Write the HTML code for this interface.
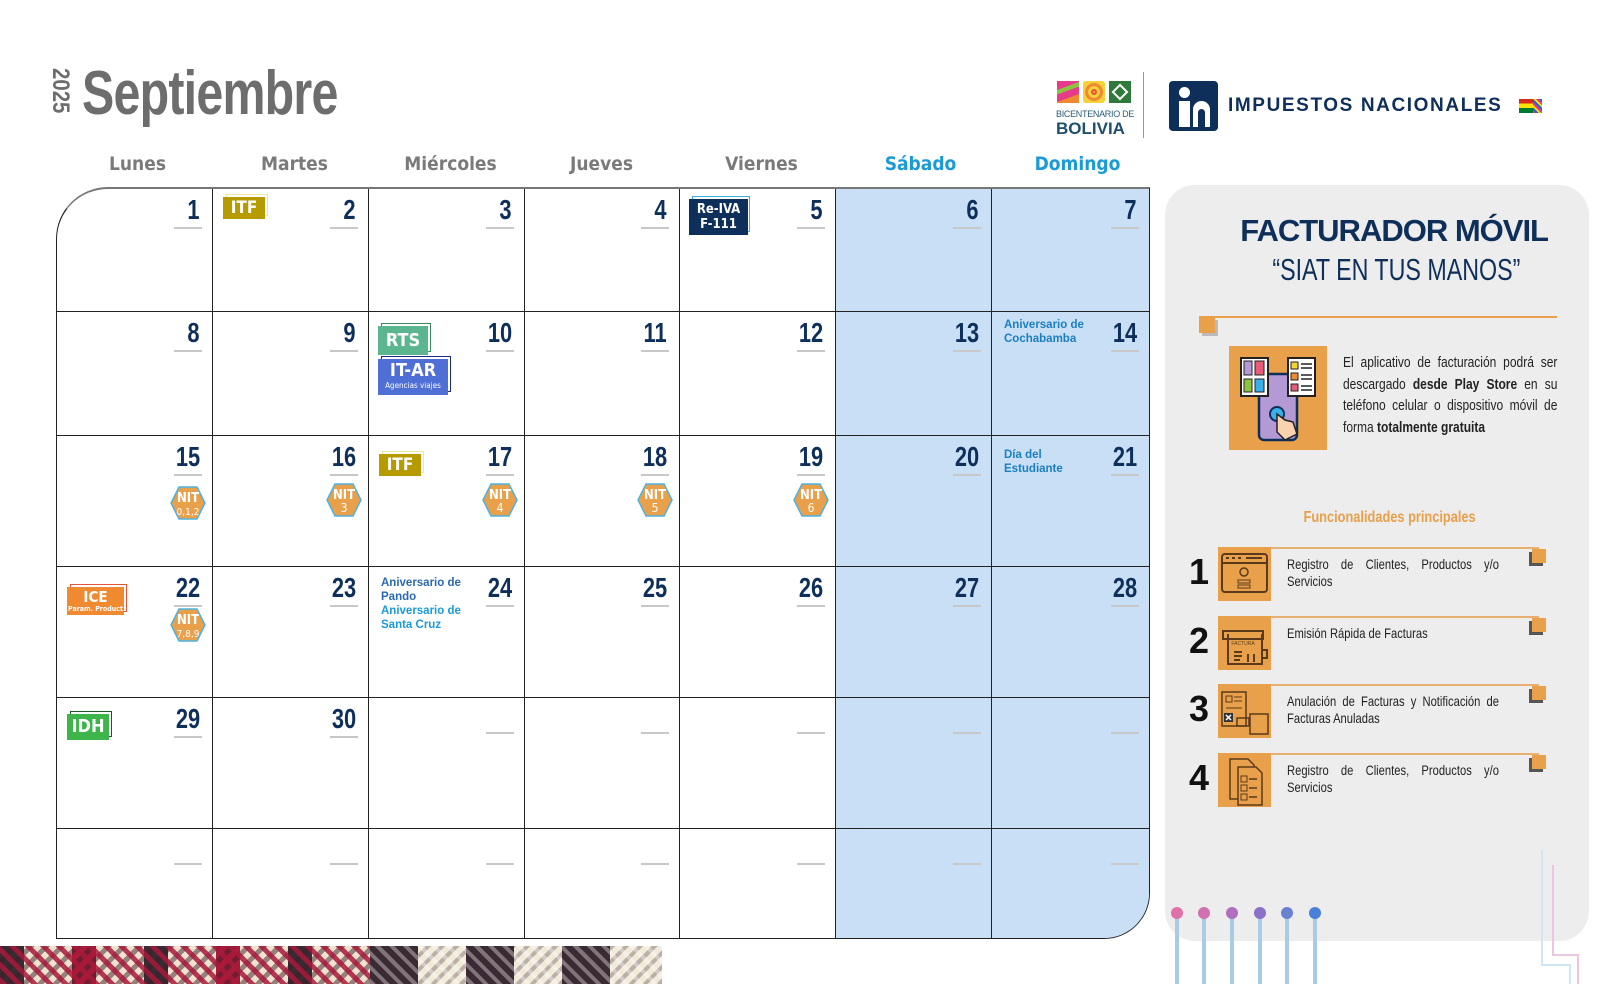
<!DOCTYPE html>
<html><head><meta charset="utf-8">
<style>
*{margin:0;padding:0;box-sizing:border-box}
body{width:1620px;height:984px;background:#fff;position:relative;overflow:hidden;font-family:"Liberation Sans",sans-serif}
.cd{font-family:"DejaVu Sans Condensed","Liberation Sans",sans-serif}
.abs{position:absolute}
.dh{position:absolute;top:153px;width:157px;text-align:center;font-size:19px;color:#7a7a7a;font-weight:bold}
.cell{position:absolute;border-right:1.5px solid #222;border-bottom:1.5px solid #222}
.num{position:absolute;right:12px;top:5px;font-family:"Liberation Sans",sans-serif;font-weight:bold;font-size:28px;color:#0d2f5a;transform:scaleX(.78);transform-origin:right top}
.ul{position:absolute;right:10px;top:38px;width:28px;height:2px;background:#c8c8c8}
.bd{position:absolute;color:#fff;font-family:"DejaVu Sans Condensed",sans-serif;font-weight:bold;text-align:center}
.hex{position:absolute;right:6px;top:50px;width:36px;height:34px}
.ev{position:absolute;left:12px;top:6px;font-size:11.5px;font-weight:bold;line-height:14px}
.item{position:absolute;left:1189px;width:360px;height:56px}
.item .n{position:absolute;left:0;top:4px;font-size:36px;font-weight:bold;color:#111}
.item .ib{position:absolute;left:29px;top:0;width:53px;height:54px;background:#e8a04a}
.item .ln{position:absolute;left:82px;top:0;width:268px;height:2px;background:#e8b070}
.item .t{position:absolute;left:98px;top:9px;width:265px;font-size:14px;color:#222;line-height:17px;text-align:justify;transform:scaleX(.8);transform-origin:left top}
.item .cr{position:absolute;left:343px;top:2px;width:14px;height:14px;background:#e8a04a;box-shadow:-3px 3px 0 #555}
</style></head><body>

<div class="abs" style="left:48px;top:68px;width:26px;height:60px;">
  <div style="transform:rotate(90deg) scaleX(.85);transform-origin:0 0;position:absolute;left:26px;top:0;font-size:24px;font-weight:bold;color:#6d6d6d;white-space:nowrap">2025</div>
</div>
<div class="abs" style="left:82px;top:58px;font-size:62px;font-weight:bold;color:#6d6d6d;letter-spacing:-1px;transform:scaleX(.78);transform-origin:left top">Septiembre</div>

<div class="abs" style="left:1057px;top:81px;width:22px;height:22px;background:linear-gradient(160deg,#e63a8a 0 30%,#8bc43f 30% 45%,#e63a8a 45% 70%,#f08a30 70%)"></div>
<div class="abs" style="left:1083px;top:81px;width:22px;height:22px;background:#f6d23a;border-radius:3px"><div style="position:absolute;left:2px;top:2px;width:18px;height:18px;border-radius:50%;border:3px solid #f08a30;box-shadow:inset 0 0 0 3px #f6d23a,inset 0 0 0 5px #e8533a"></div></div>
<div class="abs" style="left:1109px;top:81px;width:22px;height:22px;background:#2f7a3a"><div style="position:absolute;left:5px;top:5px;width:12px;height:12px;transform:rotate(45deg);border:2px solid #fff"></div></div>
<div class="abs" style="left:1056px;top:109px;font-size:9px;color:#2b5d7a;letter-spacing:-0.3px">BICENTENARIO DE</div>
<div class="abs" style="left:1056px;top:119px;font-size:17px;font-weight:bold;color:#1e4f6b">BOLIVIA</div>
<div class="abs" style="left:1143px;top:72px;width:1px;height:66px;background:#999"></div>
<div class="abs" style="left:1169px;top:81px;width:49px;height:50px;background:#0d2f5a;border-radius:4px">
  <div style="position:absolute;left:10px;top:6px;width:11px;height:11px;border-radius:50%;background:#fff"></div>
  <div style="position:absolute;left:10px;top:20px;width:11px;height:26px;background:#fff"></div>
  <div style="position:absolute;left:24px;top:20px;width:17px;height:26px;background:#fff;border-radius:9px 9px 0 0"></div>
  <div style="position:absolute;left:29px;top:28px;width:7px;height:18px;background:#0d2f5a;border-radius:4px 4px 0 0"></div>
</div>
<div class="abs" style="left:1228px;top:95px;font-size:19px;font-weight:bold;color:#0d2f5a;letter-spacing:1.6px">IMPUESTOS NACIONALES</div>
<div class="abs" style="left:1519px;top:99px;width:23px;height:14px;background:linear-gradient(#d52b1e 0 33%,#f9e300 33% 66%,#007934 66%)"></div>
<div class="abs" style="left:1533px;top:99px;width:9px;height:14px;background:repeating-linear-gradient(45deg,#e63a8a 0 2px,#2a64c8 2px 4px,#f9e300 4px 6px)"></div>

<div class="dh cd" style="left:59px">Lunes</div>
<div class="dh cd" style="left:216px">Martes</div>
<div class="dh cd" style="left:372px">Miércoles</div>
<div class="dh cd" style="left:523px">Jueves</div>
<div class="dh cd" style="left:683px">Viernes</div>
<div class="dh cd" style="left:842px;color:#1a9ad6">Sábado</div>
<div class="dh cd" style="left:999px;color:#1a9ad6">Domingo</div>

<div class="abs" style="left:56px;top:187px;width:1094px;height:752px;border:1.5px solid #222;border-top:2.5px solid #777;border-radius:52px 0 46px 0;overflow:hidden;background:#fff">
  <div class="abs" style="left:779px;top:0;width:320px;height:760px;background:#c9dff5"></div>
  <div id="g"></div>
</div>

<script>
var cols=[0,156,312,468,623,779,935,1092];
var rows=[0,123,247,378,509,640,752];
var g=document.getElementById('g');
var html='';
var day=1;
for(var r=0;r<6;r++){for(var c=0;c<7;c++){
  var w=cols[c+1]-cols[c],h=rows[r+1]-rows[r];
  var br=c==6?'border-right:none;':'';var bb=r==5?'border-bottom:none;':'';
  var n='';
  if(r<5&&day<=30&&(r*7+c)<30){n='<div class="num">'+day+'</div>';day++;}
  var ul='<div class="ul"'+(n?'':' style="top:34px"')+'></div>';
  html+='<div class="cell" id="c'+r+'_'+c+'" style="left:'+cols[c]+'px;top:'+rows[r]+'px;width:'+w+'px;height:'+h+'px;'+br+bb+'">'+n+ul+'</div>';
}}
g.innerHTML=html;
function add(r,c,s){document.getElementById('c'+r+'_'+c).insertAdjacentHTML('beforeend',s);}
function badge(r,c,x,y,w,h,bg,brd,txt,fs){add(r,c,'<div class="abs" style="left:'+(x+3)+'px;top:'+(y-3)+'px;width:'+w+'px;height:'+h+'px;border:1px solid '+brd+'"></div><div class="bd" style="left:'+x+'px;top:'+y+'px;width:'+w+'px;height:'+h+'px;background:'+bg+';font-size:'+fs+'px;line-height:'+h+'px">'+txt+'</div>');}
function hex(r,c,t,sub,top){add(r,c,'<svg class="hex" style="top:'+top+'px" viewBox="0 0 36 34"><polygon points="9,1 27,1 35,17 27,33 9,33 1,17" fill="#e8a04a" stroke="#4fb3e0" stroke-width="1.5"/><text x="18" y="16" text-anchor="middle" font-family="DejaVu Sans Condensed" font-weight="bold" font-size="13" fill="#fff">NIT</text><text x="18" y="29" text-anchor="middle" font-family="DejaVu Sans Condensed" font-size="'+(sub.length>2?10:12)+'" fill="#fff">'+sub+'</text></svg>');}
badge(0,1,10,8,42,22,'#b59a00','#efe6a0','ITF',17);
add(0,4,'<div class="abs" style="left:12px;top:7px;width:58px;height:36px;border:1px solid #3ab0e8"></div><div class="bd" style="left:9px;top:10px;width:59px;height:36px;background:#0d2f5a;font-size:13px;line-height:15px;padding-top:3px">Re-IVA<br>F-111</div>');
badge(1,2,9,14,50,29,'#5bb58e','#3a8a60','RTS',18);
add(1,2,'<div class="abs" style="left:12px;top:44px;width:70px;height:36px;border:1px solid #1a2a8a"></div><div class="bd" style="left:9px;top:47px;width:70px;height:36px;background:#4f6fd6;font-size:18px;line-height:20px;padding-top:2px">IT-AR<div style="font-size:8px;line-height:9px;font-weight:normal">Agencias viajes</div></div>');
badge(2,2,10,18,42,22,'#b59a00','#efe6a0','ITF',17);
add(3,0,'<div class="abs" style="left:13px;top:17px;width:57px;height:28px;border:1px solid #e8533a"></div><div class="bd" style="left:10px;top:20px;width:57px;height:28px;background:#f08a30;font-size:15px;line-height:16px;padding-top:2px">ICE<div style="font-size:7px;line-height:8px">Param. Product</div></div>');
badge(4,0,10,16,42,26,'#3db54a','#1a5a2a','IDH',18);
hex(2,0,'NIT','0,1,2',50);hex(2,1,'NIT','3',47);hex(2,2,'NIT','4',47);hex(2,3,'NIT','5',47);hex(2,4,'NIT','6',47);
hex(3,0,'NIT','7,8,9',41);
add(1,6,'<div class="ev" style="color:#1a7fc0">Aniversario de<br>Cochabamba</div>');
add(2,6,'<div class="ev" style="color:#1a7fc0;top:12px">Día del<br>Estudiante</div>');
add(3,2,'<div class="ev" style="color:#2a6ab0;top:9px">Aniversario de<br>Pando<br><span style="color:#1a9ad6">Aniversario de<br>Santa Cruz</span></div>');
</script>

<div class="abs" style="left:1165px;top:185px;width:424px;height:756px;background:#ededed;border-radius:30px"></div>
<div class="abs" style="left:1163px;top:213px;width:385px;text-align:right;font-size:31px;font-weight:bold;color:#0d2f5a;letter-spacing:-1px">FACTURADOR MÓVIL</div>
<div class="abs" style="left:1196px;top:252px;width:400px;text-align:center;"><span style="display:inline-block;font-size:31px;color:#0d2f5a;transform:scaleX(.75)">“SIAT EN TUS MANOS”</span></div>
<div class="abs" style="left:1199px;top:316px;width:358px;height:2px;background:#e8a04a"></div>
<div class="abs" style="left:1202px;top:320px;width:16px;height:16px;background:#bbb"></div>
<div class="abs" style="left:1199px;top:317px;width:16px;height:16px;background:#e8a04a"></div>
<div class="abs" style="left:1229px;top:346px;width:98px;height:104px;background:#e8a04a">
  <svg width="98" height="104" viewBox="0 0 98 104">
    <rect x="30" y="28" width="38" height="66" rx="5" fill="#b39ad4" stroke="#0d2f5a" stroke-width="2.5"/>
    <rect x="12" y="12" width="27" height="38" fill="#fff" stroke="#222" stroke-width="2"/>
    <rect x="15" y="15" width="8" height="14" fill="#b39ad4" stroke="#222"/><rect x="26" y="15" width="9" height="14" fill="#e85a7a" stroke="#222"/>
    <rect x="15" y="33" width="8" height="13" fill="#8bc43f" stroke="#222"/><rect x="26" y="33" width="9" height="13" fill="#3ab0e8" stroke="#222"/>
    <rect x="59" y="12" width="27" height="38" fill="#fff" stroke="#222" stroke-width="2"/>
    <rect x="62" y="16" width="7" height="7" fill="#f6d23a" stroke="#222"/><rect x="62" y="27" width="7" height="7" fill="#f08a30" stroke="#222"/><rect x="62" y="38" width="7" height="7" fill="#e85a7a" stroke="#222"/>
    <path d="M72 18h11M72 22h11M72 29h11M72 33h11M72 40h11M72 44h11" stroke="#222" stroke-width="1.5"/>
    <circle cx="48" cy="68" r="7" fill="#3ab0e8" stroke="#0d2f5a" stroke-width="2"/>
    <path d="M48 68 l0 18 l8 8 l12 -6 l-4 -12 l-8 -2 z" fill="#fbd2b0" stroke="#222" stroke-width="1.5"/>
  </svg>
</div>
<div class="abs" style="left:1343px;top:352px;width:268px;font-size:15px;line-height:21.5px;color:#222;text-align:justify;transform:scaleX(.8);transform-origin:left top">El aplicativo de facturación podrá ser descargado <b>desde Play Store</b> en su teléfono celular o dispositivo móvil de forma <b>totalmente gratuita</b></div>
<div class="abs" style="left:1240px;top:509px;width:300px;text-align:center;"><span style="display:inline-block;font-size:16px;font-weight:bold;color:#e8a04a;transform:scaleX(.8);white-space:nowrap">Funcionalidades principales</span></div>

<div class="item" style="top:547px"><div class="n">1</div><div class="ib"><svg width="53" height="54"><rect x="4" y="7" width="45" height="38" rx="3" fill="none" stroke="#5a3a1a" stroke-width="2"/><path d="M4 16h45M8 11h3M14 11h3M20 11h3M28 11h16" stroke="#5a3a1a" stroke-width="2"/><circle cx="26" cy="25" r="4" fill="none" stroke="#5a3a1a" stroke-width="1.5"/><rect x="20" y="33" width="12" height="3" fill="none" stroke="#5a3a1a"/><rect x="20" y="38" width="12" height="3" fill="none" stroke="#5a3a1a"/></svg></div><div class="ln"></div><div class="t">Registro de Clientes, Productos y/o Servicios</div><div class="cr"></div></div>
<div class="item" style="top:616px"><div class="n">2</div><div class="ib"><svg width="53" height="54"><rect x="5" y="15" width="40" height="8" fill="none" stroke="#5a3a1a" stroke-width="2"/><path d="M10 18v30h34v-30M16 36h8M16 40h8M16 44h6M30 38v8M36 38v8M44 34h5v8h-5" fill="none" stroke="#5a3a1a" stroke-width="2"/><text x="25" y="29" font-size="5" fill="#5a3a1a" text-anchor="middle">FACTURA</text></svg></div><div class="ln"></div><div class="t">Emisión Rápida de Facturas</div><div class="cr"></div></div>
<div class="item" style="top:684px"><div class="n">3</div><div class="ib"><svg width="53" height="54"><rect x="4" y="8" width="24" height="34" fill="none" stroke="#5a3a1a" stroke-width="1.5"/><rect x="8" y="12" width="6" height="6" fill="none" stroke="#5a3a1a"/><path d="M16 13h8M16 17h8M8 24h16" stroke="#5a3a1a"/><rect x="6" y="29" width="9" height="9" fill="#333"/><path d="M8 31l5 5M13 31l-5 5" stroke="#fff" stroke-width="1.5"/><rect x="32" y="30" width="18" height="20" fill="none" stroke="#5a3a1a" stroke-width="1.5"/><rect x="19" y="34" width="12" height="8" fill="none" stroke="#5a3a1a" stroke-width="1.5"/></svg></div><div class="ln"></div><div class="t">Anulación de Facturas y Notificación de Facturas Anuladas</div><div class="cr"></div></div>
<div class="item" style="top:753px"><div class="n">4</div><div class="ib"><svg width="53" height="54"><path d="M12 6h18l6 6v34h-24z" fill="none" stroke="#5a3a1a" stroke-width="1.5"/><path d="M20 14h18l6 6v32h-24z" fill="#e8a04a" stroke="#5a3a1a" stroke-width="1.5"/><rect x="23" y="23" width="6" height="6" fill="none" stroke="#5a3a1a"/><rect x="23" y="32" width="6" height="6" fill="none" stroke="#5a3a1a"/><rect x="23" y="41" width="6" height="6" fill="none" stroke="#5a3a1a"/><path d="M31 26h8M31 35h8M31 44h8" stroke="#5a3a1a" stroke-width="1.5"/></svg></div><div class="ln"></div><div class="t">Registro de Clientes, Productos y/o Servicios</div><div class="cr"></div></div>

<svg class="abs" style="left:1160px;top:850px" width="460" height="134">
  <g stroke="#a8cce6" stroke-width="4" fill="none">
    <path d="M17 63V134M44 63V134M72 63V134M100 63V134M127 63V134M155 63V134"/>
  </g>
  <circle cx="17" cy="63" r="6" fill="#e070a8"/><circle cx="44" cy="63" r="6" fill="#d070b0"/><circle cx="72" cy="63" r="6" fill="#b070c0"/><circle cx="100" cy="63" r="6" fill="#8a70c8"/><circle cx="127" cy="63" r="6" fill="#6a80d0"/><circle cx="155" cy="63" r="6" fill="#4a80d8"/>
  <path d="M382 -5V115H410V134" stroke="#cfe6f5" stroke-width="2" fill="none"/>
  <path d="M393 15V105H418V134" stroke="#ecc6e0" stroke-width="2" fill="none"/>
</svg>

<div class="abs" style="left:0;top:946px;width:370px;height:38px;background:
linear-gradient(90deg,#3a2a33 0 24px,#f1e2d0 24px 72px,#a8193a 72px 96px,#f1e2d0 96px 144px,#3a2a33 144px 168px,#f1e2d0 168px 216px,#a8193a 216px 240px,#f1e2d0 240px 288px,#3a2a33 288px 312px,#f1e2d0 312px 370px)"></div>
<div class="abs" style="left:0;top:946px;width:370px;height:38px;background:repeating-linear-gradient(45deg,rgba(168,25,58,.85) 0 5px,transparent 5px 11px),repeating-linear-gradient(-45deg,rgba(60,30,40,.5) 0 5px,transparent 5px 11px)"></div>
<div class="abs" style="left:370px;top:946px;width:292px;height:38px;background:linear-gradient(90deg,#3a2a33 0 48px,#f1ead8 48px 96px,#3a2a33 96px 144px,#f1ead8 144px 192px,#3a2a33 192px 240px,#f1ead8 240px 292px)"></div>
<div class="abs" style="left:370px;top:946px;width:292px;height:38px;background:repeating-linear-gradient(45deg,rgba(255,255,255,.35) 0 4px,transparent 4px 10px),repeating-linear-gradient(-45deg,rgba(60,40,50,.3) 0 4px,transparent 4px 10px)"></div>
</body></html>
